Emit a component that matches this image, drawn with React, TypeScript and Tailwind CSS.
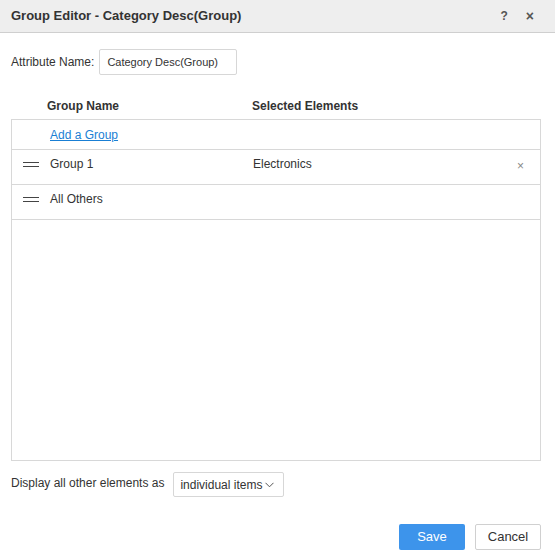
import React from 'react';

const DragHandle: React.FC = () => (
    <span className="flex flex-col gap-[3px] w-[16px]">
        <span className="block h-[1px] bg-[#444]" />
        <span className="block h-[1px] bg-[#444]" />
    </span>
);

const Chevron: React.FC = () => (
    <svg width="9" height="6" viewBox="0 0 9 6" className="ml-[3px]">
        <path d="M0.5 0.8 L4.5 4.8 L8.5 0.8" fill="none" stroke="#555" strokeWidth="1" />
    </svg>
);

const groups = [
    { name: 'Group 1', elements: 'Electronics', removable: true },
    { name: 'All Others', elements: '', removable: false },
];

export default function App() {
    return (
        <div className="w-[555px] h-[559px] bg-white text-[#333] text-[13px] font-['Liberation_Sans',Arial,sans-serif] flex flex-col">
            <div className="h-[33px] bg-[#eeeeee] border-b border-[#cfcfcf] flex items-center justify-between pl-[11px] pr-[21px] shrink-0">
                <span className="font-bold text-[13px] text-[#333]">Group Editor - Category Desc(Group)</span>
                <div className="flex items-center gap-[18px] text-[#555] font-bold">
                    <span className="text-[12px]">?</span>
                    <span className="text-[14px] leading-none">×</span>
                </div>
            </div>

            <div className="flex-1 flex flex-col px-[11px]">
                <div className="flex items-center mt-[16px] h-[26px]">
                    <span className="text-[12px]">Attribute Name:</span>
                    <div className="ml-[5px] w-[138px] h-[26px] border border-[#d7d7d7] rounded-[2px] flex items-center px-[7px] text-[11px]">
                        Category Desc(Group)
                    </div>
                </div>

                <div className="flex mt-[22px] h-[18px] items-center font-bold text-[12px]">
                    <span className="pl-[36px] w-[241px]">Group Name</span>
                    <span>Selected Elements</span>
                </div>

                <div className="mt-[4px] w-[530px] h-[342px] border border-[#d8d8d8]">
                    <div className="h-[30px] flex items-center pl-[38px] border-b border-[#d8d8d8]">
                        <a href="#" className="text-[#1a7fd4] underline text-[12px]">Add a Group</a>
                    </div>
                    {groups.map(g => (
                        <div key={g.name} className="h-[35px] flex items-center pb-[6px] border-b border-[#d8d8d8] text-[12px]">
                            <span className="pl-[11px] w-[38px]"><DragHandle /></span>
                            <span className="w-[203px]">{g.name}</span>
                            <span className="flex-1">{g.elements}</span>
                            {g.removable && <span className="text-[#888] text-[12px] pr-[16px] pt-[4px]">×</span>}
                        </div>
                    ))}
                </div>

                <div className="flex items-center mt-[11px]">
                    <span className="text-[12px] -mt-[4px]">Display all other elements as</span>
                    <div className="ml-[9px] w-[111px] h-[25px] border border-[#d7d7d7] rounded-[2px] flex items-center px-[6px] text-[12px]">
                        individual items
                        <Chevron />
                    </div>
                </div>

                <div className="flex justify-end gap-[10px] mt-[27px] pr-[3px]">
                    <button className="w-[66px] h-[26px] bg-[#3d94eb] text-white text-[13px] rounded-[2px]">Save</button>
                    <button className="w-[66px] h-[26px] bg-white border border-[#d0d0d0] text-[#333] text-[13px] rounded-[2px]">Cancel</button>
                </div>
            </div>
        </div>
    );
}
